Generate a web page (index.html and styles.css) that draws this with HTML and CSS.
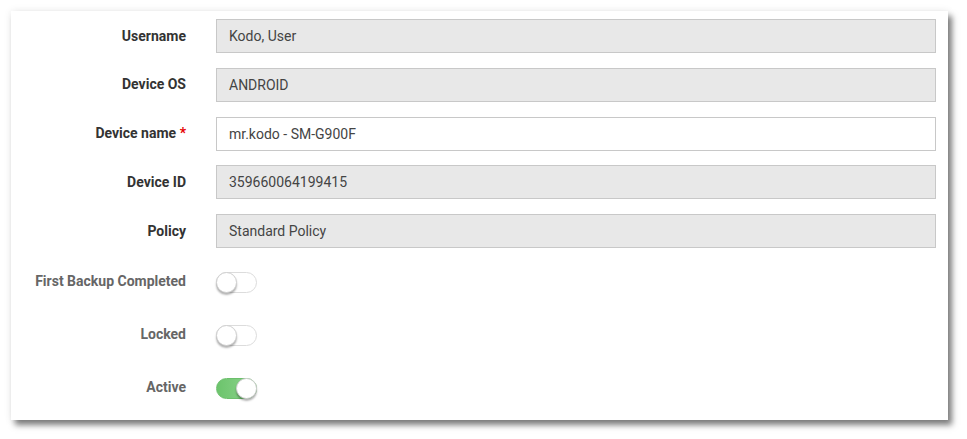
FILE: index.html
```html
<!DOCTYPE html>
<html>
<head>
<meta charset="utf-8">
<link rel="stylesheet" href="styles.css">
</head>
<body>
<div class="card">
  <div class="form">
    <div class="row field">
      <label class="label">Username</label>
      <div class="input readonly">Kodo, User</div>
    </div>
    <div class="row field">
      <label class="label">Device OS</label>
      <div class="input readonly">ANDROID</div>
    </div>
    <div class="row field">
      <label class="label">Device name <span class="req">*</span></label>
      <div class="input">mr.kodo - SM-G900F</div>
    </div>
    <div class="row field">
      <label class="label">Device ID</label>
      <div class="input readonly">359660064199415</div>
    </div>
    <div class="row field">
      <label class="label">Policy</label>
      <div class="input readonly">Standard Policy</div>
    </div>
    <div class="row toggle-row first">
      <label class="label muted">First Backup Completed</label>
      <span class="toggle"><span class="knob"></span></span>
    </div>
    <div class="row toggle-row">
      <label class="label muted">Locked</label>
      <span class="toggle"><span class="knob"></span></span>
    </div>
    <div class="row toggle-row">
      <label class="label muted">Active</label>
      <span class="toggle on"><span class="knob"></span></span>
    </div>
  </div>
</div>
</body>
</html>
```
FILE: styles.css
```css
* { box-sizing: border-box; }
html, body { margin: 0; padding: 0; background: #fff; }
body {
  padding: 11px 19px 19px 11px;
  font-family: Roboto, "Liberation Sans", sans-serif;
}
.card {
  width: 937px;
  height: 409px;
  background: #fff;
  box-shadow: 4px 5px 6px rgba(0,0,0,0.5), 0 0 8px rgba(0,0,0,0.08);
  padding: 8px 12px 20px 0;
}
.form {
  display: flex;
  flex-direction: column;
}
.row {
  display: grid;
  grid-template-columns: 175px 1fr;
  column-gap: 30px;
  align-items: center;
}
.field { height: 34px; margin-bottom: 14.75px; }
.field:nth-child(5) { margin-bottom: 0; }
.toggle-row { height: 20px; margin-top: 33px; }
.toggle-row.first { margin-top: 24px; }
.label {
  text-align: right;
  font-size: 14px;
  font-weight: bold;
  color: #333;
  line-height: 16px;
  margin-top: -1px;
}
.label.muted { color: #666; margin-top: -3px; }
.req { color: #e60000; }
.input {
  height: 34px;
  border: 1px solid #c8c8c8;
  background: #fff;
  padding: 0 12px;
  font-size: 14px;
  color: #444;
  line-height: 32px;
}
.input.readonly { background: #e8e8e8; }
.toggle {
  position: relative;
  display: block;
  width: 41px;
  height: 21px;
  border: 1px solid #dcdcdc;
  border-radius: 11px;
  background: #fff;
}
.knob {
  position: absolute;
  left: -1px;
  top: -1px;
  width: 21px;
  height: 21px;
  border-radius: 50%;
  background: #fff;
  border: 1px solid #d0d0d0;
  box-shadow: 0 2px 2px rgba(0,0,0,0.3);
}
.toggle.on {
  background: linear-gradient(90deg, #6cc46c, #8fd48f);
  border-color: #6cbf6c;
}
.toggle.on .knob { left: auto; right: -1px; }
```
